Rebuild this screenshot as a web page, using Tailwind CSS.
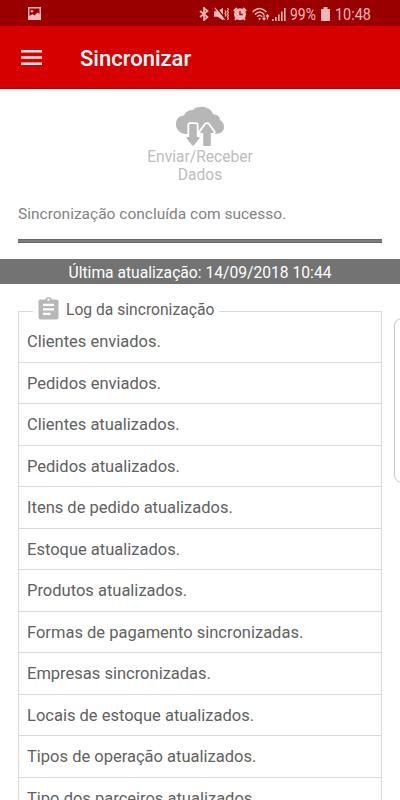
<!DOCTYPE html>
<html lang="pt-BR">
<head>
<meta charset="utf-8">
<title>Sincronizar</title>
<script src="https://cdn.jsdelivr.net/npm/@tailwindcss/browser@4"></script>
</head>
<body class="relative h-[800px] w-[400px] overflow-hidden bg-white font-[Roboto,sans-serif] text-[#616161]">
<div class="flex h-[800px] flex-col overflow-hidden">
  <div class="flex h-[26px] shrink-0 items-center bg-[#9b0000] pr-[29px] pl-7 text-[#f0b9b9]">
    <svg class="mt-px h-[13px] w-[13px]" viewBox="0 0 13 13" fill="currentColor"><path fill-rule="evenodd" d="M0 0H13V13H0ZM1.500 1.500V9L4.500 7L6.500 8.500L9.500 5.500L11.500 7V1.500Z"/><circle cx="4" cy="4.200" r="1.200"/></svg>
    <svg class="mt-[2px] ml-auto h-[14px] w-[10px]" viewBox="0 0 10 14" fill="none" stroke="currentColor" stroke-width="1.700"><path d="M1 4L8.500 10L5 13V1L8.500 4L1 10"/></svg>
    <svg class="mt-[2px] ml-[5px] h-[14px] w-[15px]" viewBox="0 0 15 14" fill="currentColor"><path d="M0 4.200H3.500L9 .8V13.200L3.500 9.800H0Z"/><path d="M2 0L11 11.500" stroke="#9b0000" stroke-width="1.300"/><path d="M.8 .8L10.500 12.800" fill="none" stroke="currentColor" stroke-width="1.300"/><path d="M11 3.500L12 5L11 6.500L12 8L11 9.500M13.500 1L14.300 2.500L13.500 4L14.300 5.500L13.500 7L14.300 8.500L13.500 10L14.300 11.500L13.500 13" fill="none" stroke="currentColor" stroke-width="1.200"/></svg>
    <svg class="mt-[2px] ml-1 h-[14px] w-[14px]" viewBox="0 0 14 14" fill="currentColor"><circle cx="7" cy="7.200" r="6"/><path d="M.8 4L4 1M10 1L13.200 4M3.500 11L2 13M10.500 11L12 13" stroke="currentColor" stroke-width="1.800"/><path d="M7 4V7.500H9.800" fill="none" stroke="#9b0000" stroke-width="1.300"/></svg>
    <svg class="mt-[2px] ml-[5px] h-[14px] w-[18px]" viewBox="0 0 18 14" fill="none" stroke="currentColor" stroke-width="1.500"><path d="M.7 5Q7.500-2 14.500 5M3 7.400Q7.500 2.500 12.300 7.400M5.200 9.700Q7.500 7 10 9.700"/><circle cx="7.600" cy="11.800" r="1.100" fill="currentColor" stroke="none"/><path d="M12 8V12.500M10.500 11L12 12.700L13.500 11M15.500 12.500V8M14 9.500L15.500 7.800L17 9.500" stroke-width="1.200"/></svg>
    <svg class="mt-[2px] ml-[2px] h-[13px] w-[14px]" viewBox="0 0 14 13" fill="currentColor"><path d="M0 11H1.600V13H0ZM3 9H4.600V13H3ZM6 6.500H7.600V13H6ZM9 3.500H10.600V13H9ZM12 0H13.600V13H12Z"/></svg>
    <span class="mt-[3px] ml-[4px] w-[27px] text-[16px] leading-none whitespace-nowrap"><span class="inline-block origin-left scale-x-[.87]">99%</span></span>
    <svg class="mt-[2px] ml-[4px] h-[14px] w-[9px]" viewBox="0 0 9 14" fill="currentColor"><path d="M2.500 0H6.500V2H9V13Q9 14 8 14H1Q0 14 0 13V2H2.500Z"/></svg>
    <span class="mt-[3px] ml-[5px] w-[36px] text-[16px] leading-none whitespace-nowrap"><span class="inline-block origin-left scale-x-[.9]">10:48</span></span>
  </div>
  <header class="flex h-[63px] shrink-0 items-center border-b border-[#b80000] bg-[#d60000] pl-[21px] text-white">
    <svg class="h-[15px] w-[21px]" viewBox="0 0 21 15" fill="#fff0f0"><path d="M0 0H21V2.500H0ZM0 6.200H21V8.700H0ZM0 12.400H21V14.900H0Z"/></svg>
    <h1 class="mt-[2px] ml-[38px] text-[22px] font-medium">Sincronizar</h1>
  </header>
  <div class="flex h-[114px] shrink-0 flex-col items-center pt-[17px] text-[#bdbdbd]">
    <svg class="h-[42px] w-[50px] shrink-0" viewBox="0 0 50 42">
      <defs><path id="arrows" stroke-linejoin="round" d="M14.200 19Q14.200 18 15.200 18H20.800Q21.800 18 21.800 19V31H23.700Q25.500 31 24.200 32.700L19.200 39Q18 40 16.800 39L11.800 32.700Q10.500 31 12.300 31H14.200ZM28.200 39Q28.200 40 29.200 40H34.800Q35.800 40 35.800 39V27H37.900Q39.500 27 38.300 25.300L33.200 18.500Q32 17.500 30.800 18.500L25.700 25.300Q24.500 27 26.300 27H28.200Z"/></defs>
      <path fill="#b7b7b7" d="M10 28C4 27 1 23 1 18.500C1 13 4 10 9 9.500C11 5 15 4 18 4C21 .5 28 0 32 2C35 3 37 5 38 8C43 9 45 11 45 14C48 16 49 18 49 21C49 25 46 28 40 28Z"/>
      <use href="#arrows" fill="white" stroke="white" stroke-width="3.600"/>
      <use href="#arrows" fill="#b7b7b7"/>
    </svg>
    <p class="text-center text-[15.600px] leading-[18px]">Enviar/Receber<br>Dados</p>
  </div>
  <p class="h-9 shrink-0 pl-[18px] text-[15.500px] leading-[22px] text-[#828282]">Sincronização concluída com sucesso.</p>
  <div class="mx-[18px] h-1 shrink-0 border-y border-[#686868] bg-[#7d7d7d]"></div>
  <div class="mt-4 flex h-[25px] shrink-0 items-center justify-center bg-[#737373] pt-[2px] text-[15.650px] text-white">Última atualização: 14/09/2018 10:44</div>
  <fieldset class="mx-[18px] mt-[11px] h-[530px] shrink-0 border border-[#dadada]">
    <legend class="ml-[14px] flex h-[33px] items-center px-[5px] pb-[4px] text-[15.650px]">
      <svg class="mb-[3px] h-[23px] w-[21px]" viewBox="0 0 21 23"><path fill="#b7b7b7" fill-rule="evenodd" d="M2 2.500H7Q8 0 10.500 0Q13 0 14 2.500H18.500Q20.500 2.500 20.500 4.500V20.500Q20.500 22.500 18.500 22.500H2.500Q.5 22.500 .5 20.500V4.500Q.5 2.500 2 2.500ZM10.500 1.600A1.200 1.200 0 1 0 10.500 4A1.200 1.200 0 0 0 10.500 1.600ZM5 6.800V9H16V6.800ZM5 11.300V13.500H16V11.300ZM5 15.800V18H12.500V15.800Z"/></svg>
      <span class="ml-[7px]">Log da sincronização</span>
    </legend>
    <ul class="-mt-[7px] text-[16.500px] [&>li]:flex [&>li]:h-[41.500px] [&>li]:items-center [&>li]:border-b [&>li]:border-[#dadada] [&>li]:pt-[3px] [&>li]:pl-2">
      <li>Clientes enviados.</li>
      <li>Pedidos enviados.</li>
      <li>Clientes atualizados.</li>
      <li>Pedidos atualizados.</li>
      <li>Itens de pedido atualizados.</li>
      <li>Estoque atualizados.</li>
      <li>Produtos atualizados.</li>
      <li>Formas de pagamento sincronizadas.</li>
      <li>Empresas sincronizadas.</li>
      <li>Locais de estoque atualizados.</li>
      <li>Tipos de operação atualizados.</li>
      <li>Tipo dos parceiros atualizados.</li>
    </ul>
  </fieldset>
</div>
<div class="absolute top-[318px] left-[394px] h-[165px] w-5 rounded-lg border border-[#c4c4c4] bg-white"></div>
</body>
</html>
